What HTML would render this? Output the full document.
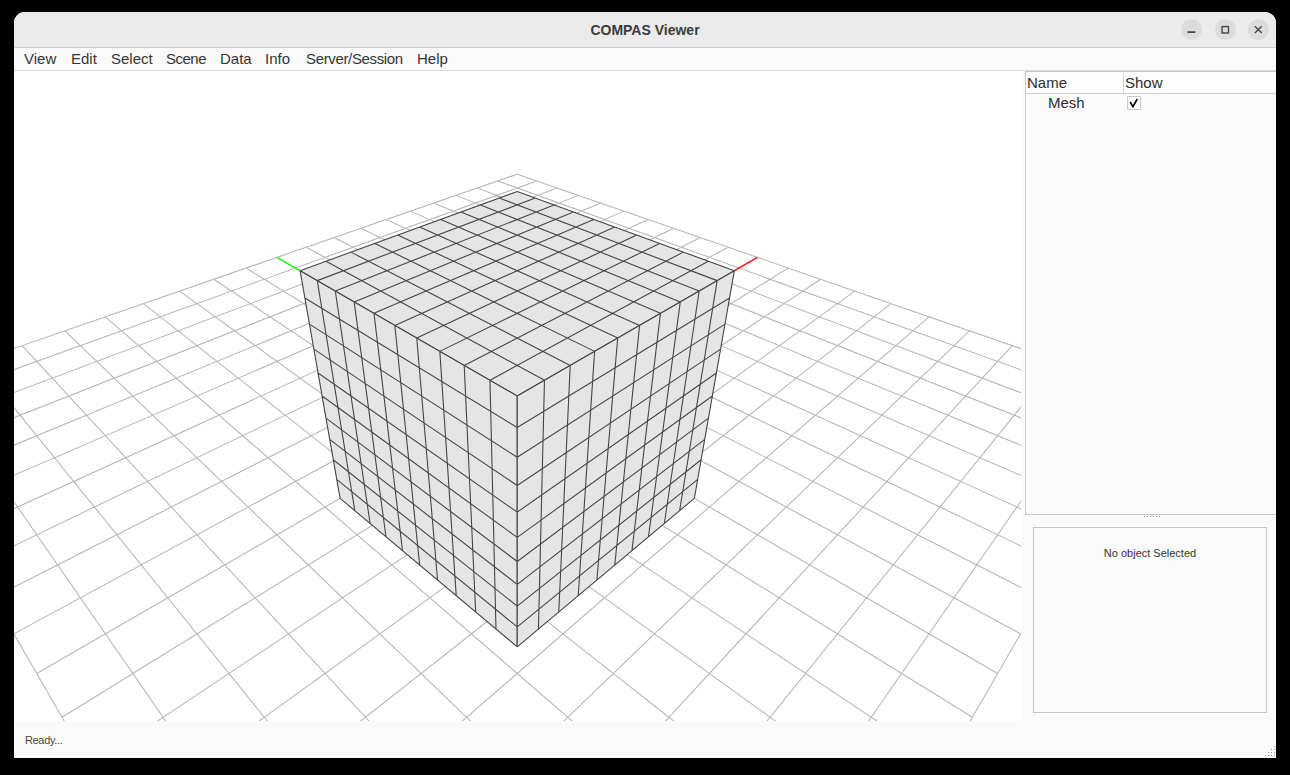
<!DOCTYPE html>
<html><head><meta charset="utf-8">
<style>
html,body{margin:0;padding:0;background:#000;width:1290px;height:775px;overflow:hidden;font-family:"Liberation Sans",sans-serif;}
#win{position:absolute;left:14px;top:12px;width:1262px;height:746px;background:#fafafa;border-radius:11px 11px 0 0;overflow:hidden;}
#title{position:absolute;left:0;top:0;width:1262px;height:35px;background:#ebebeb;border-bottom:1px solid #cfcfcf;}
#title .t{position:absolute;left:0;width:1262px;top:10px;text-align:center;font-weight:bold;font-size:14px;color:#3b3b3b;}
.wb{position:absolute;top:6.5px;width:21px;height:21px;border-radius:50%;background:#dcdcdc;}
#menu{position:absolute;left:0;top:36px;width:1262px;height:22px;background:#fafafa;border-bottom:1px solid #dadada;}
#menu span{position:absolute;top:2px;font-size:15px;color:#353535;}
#view{position:absolute;left:0;top:59px;width:1007px;height:650px;background:#fff;overflow:hidden;}
#tree{position:absolute;left:1011px;top:59px;width:251px;height:442px;background:#fbfbfb;border-left:1px solid #c8c8c8;border-top:1px solid #c8c8c8;border-bottom:1px solid #c8c8c8;}
#tree .hdr{position:absolute;left:0;top:0;width:251px;height:21px;border-bottom:1px solid #cdcdcd;background:#fdfdfd;}
#tree .cd{position:absolute;left:97px;top:0;width:1px;height:21px;background:#d6d6d6;}
#tree span{position:absolute;font-size:15px;color:#2e2e2e;}
#tree .cb{position:absolute;left:101px;top:24px;width:12px;height:12px;border:1px solid #c9c9c9;background:#fff;}
#props{position:absolute;left:1019px;top:515px;width:232px;height:184px;border:1px solid #c8c8c8;background:#fafafa;}
#props span{position:absolute;left:0;width:232px;text-align:center;top:19px;font-size:11px;color:#333;}
#status{position:absolute;left:0;top:709px;width:1262px;height:37px;background:#fafafa;}
#status span{position:absolute;left:11px;top:13px;font-size:11px;color:#444;letter-spacing:-0.35px;}
</style></head><body>
<div id="win">
 <div id="title"><div class="t">COMPAS Viewer</div>
  <div class="wb" style="left:1166.8px"><svg width="21" height="21" style="position:absolute;left:0;top:0"><path d="M6.4 13.1H14.3" stroke="#474747" stroke-width="1.6"/></svg></div>
  <div class="wb" style="left:1200.5px"><svg width="21" height="21" style="position:absolute;left:0;top:0"><rect x="7.1" y="7.6" width="6.4" height="6.4" fill="none" stroke="#474747" stroke-width="1.4"/></svg></div>
  <div class="wb" style="left:1233.9px"><svg width="21" height="21" style="position:absolute;left:0;top:0"><path d="M6.9 7.3L13.7 14.0M13.7 7.3L6.9 14.0" stroke="#474747" stroke-width="1.4"/></svg></div>
 </div>
 <div id="menu">
  <span style="left:10px">View</span><span style="left:57px">Edit</span><span style="left:97px">Select</span><span style="left:152px;letter-spacing:-0.5px">Scene</span><span style="left:206px">Data</span><span style="left:251px">Info</span><span style="left:292px;letter-spacing:-0.35px">Server/Session</span><span style="left:403px">Help</span>
 </div>
 <div id="view"><svg width="1007" height="650" viewBox="0 0 1007 650" style="position:absolute;left:0;top:0"><path d="M503.22,1434.68L-137.42,325.06M503.22,1434.68L1143.86,325.06M590.58,1283.37L-85.75,307.16M415.86,1283.37L1092.19,307.16M663.38,1157.27L-37.32,290.38M343.06,1157.27L1043.76,290.38M724.98,1050.58L8.18,274.62M281.46,1050.58L998.26,274.62M777.78,959.13L51.00,259.79M228.66,959.13L955.44,259.79M823.54,879.87L91.38,245.80M182.90,879.87L915.06,245.80M863.58,810.52L129.51,232.59M142.86,810.52L876.93,232.59M898.91,749.33L165.59,220.10M107.53,749.33L840.85,220.10M930.31,694.93L199.76,208.26M76.13,694.93L806.68,208.26M958.41,646.27L232.18,197.03M48.03,646.27L774.26,197.03M983.70,602.46L262.98,186.36M22.74,602.46L743.46,186.36M1006.58,562.84L292.28,176.21M-0.14,562.84L714.16,176.21M1027.38,526.81L320.18,166.54M-20.94,526.81L686.26,166.54M1046.37,493.92L346.78,157.33M-39.93,493.92L659.66,157.33M1063.78,463.76L372.18,148.53M-57.34,463.76L634.26,148.53M1079.80,436.02L396.45,140.12M-73.36,436.02L609.99,140.12M1094.58,410.42L419.66,132.08M-88.14,410.42L586.78,132.08M1108.27,386.71L441.88,124.38M-101.83,386.71L564.56,124.38M1120.98,364.69L463.18,117.01M-114.54,364.69L543.26,117.01M1132.81,344.19L483.61,109.93M-126.37,344.19L522.83,109.93M1143.86,325.06L503.22,103.14M-137.42,325.06L503.22,103.14" stroke="#b6b6b6" stroke-width="1.05" fill="none"/><path d="M503.22,325.06L743.46,186.36" stroke="#ff1a1a" stroke-width="1.6" fill="none"/><path d="M503.22,325.06L262.98,186.36" stroke="#1aff1a" stroke-width="1.6" fill="none"/><polygon points="503.22,325.06 720.37,199.69 503.22,120.54 286.07,199.69" fill="#e5e5e5"/><path d="M503.22,325.06L286.07,199.69M503.22,325.06L720.37,199.69M530.48,309.32L312.11,190.20M475.96,309.32L694.33,190.20M556.23,294.45L337.01,181.12M450.21,294.45L669.43,181.12M580.61,280.38L360.87,172.43M425.83,280.38L645.57,172.43M603.70,267.05L383.73,164.09M402.74,267.05L622.71,164.09M625.62,254.39L405.67,156.09M380.82,254.39L600.77,156.09M646.46,242.36L426.73,148.42M359.98,242.36L579.71,148.42M666.28,230.92L446.97,141.04M340.16,230.92L559.47,141.04M685.16,220.02L466.44,133.94M321.28,220.02L540.00,133.94M703.17,209.62L485.18,127.11M303.27,209.62L521.26,127.11M720.37,199.69L503.22,120.54M286.07,199.69L503.22,120.54" stroke="#454545" stroke-width="1.1" fill="none"/><polygon points="503.22,575.80 326.10,427.32 286.07,199.69 503.22,325.06" fill="#e5e5e5"/><path d="M503.22,575.80L503.22,325.06M503.22,575.80L326.10,427.32M481.99,558.00L475.96,309.32M503.22,555.94L322.77,408.41M461.67,540.97L450.21,294.45M503.22,535.15L319.32,388.77M442.21,524.66L425.83,280.38M503.22,513.34L315.73,368.36M423.56,509.02L402.74,267.05M503.22,490.45L312.00,347.14M405.67,494.03L380.82,254.39M503.22,466.40L308.12,325.06M388.49,479.62L359.98,242.36M503.22,441.09L304.07,302.06M371.98,465.78L340.16,230.92M503.22,414.42L299.86,278.10M356.10,452.47L321.28,220.02M503.22,386.27L295.46,253.09M340.82,439.66L303.27,209.62M503.22,356.54L290.87,226.98M326.10,427.32L286.07,199.69M503.22,325.06L286.07,199.69" stroke="#454545" stroke-width="1.1" fill="none"/><polygon points="503.22,575.80 680.34,427.32 720.37,199.69 503.22,325.06" fill="#e5e5e5"/><path d="M503.22,575.80L503.22,325.06M503.22,575.80L680.34,427.32M524.45,558.00L530.48,309.32M503.22,555.94L683.67,408.41M544.77,540.97L556.23,294.45M503.22,535.15L687.12,388.77M564.23,524.66L580.61,280.38M503.22,513.34L690.71,368.36M582.88,509.02L603.70,267.05M503.22,490.45L694.44,347.14M600.77,494.03L625.62,254.39M503.22,466.40L698.32,325.06M617.95,479.62L646.46,242.36M503.22,441.09L702.37,302.06M634.46,465.78L666.28,230.92M503.22,414.42L706.58,278.10M650.34,452.47L685.16,220.02M503.22,386.27L710.98,253.09M665.62,439.66L703.17,209.62M503.22,356.54L715.57,226.98M680.34,427.32L720.37,199.69M503.22,325.06L720.37,199.69" stroke="#454545" stroke-width="1.1" fill="none"/></svg></div>
 <div id="tree">
  <div class="hdr"><div class="cd"></div></div>
  <span style="left:1px;top:2px">Name</span><span style="left:99px;top:2px">Show</span>
  <span style="left:22px;top:22px">Mesh</span>
  <div class="cb"><svg width="12" height="12" style="position:absolute;left:0;top:0"><path d="M2.1 5.0L4.9 9.6L9.3 2.0" fill="none" stroke="#000" stroke-width="1.7"/></svg></div>
 </div>
 <div id="props"><span>No object Selected</span></div>
 <div id="status"><span>Ready...</span></div>
 <div style="position:absolute;left:1130px;top:504px;width:1px;height:1px;background:#8c8c8c"></div><div style="position:absolute;left:1133px;top:504px;width:1px;height:1px;background:#8c8c8c"></div><div style="position:absolute;left:1136px;top:504px;width:1px;height:1px;background:#8c8c8c"></div><div style="position:absolute;left:1139px;top:504px;width:1px;height:1px;background:#8c8c8c"></div><div style="position:absolute;left:1142px;top:504px;width:1px;height:1px;background:#8c8c8c"></div><div style="position:absolute;left:1145px;top:504px;width:1px;height:1px;background:#8c8c8c"></div><div style="position:absolute;left:1260px;top:734px;width:1px;height:1px;background:#9a9a9a"></div><div style="position:absolute;left:1260px;top:737px;width:1px;height:1px;background:#9a9a9a"></div><div style="position:absolute;left:1257px;top:737px;width:1px;height:1px;background:#9a9a9a"></div><div style="position:absolute;left:1260px;top:740px;width:1px;height:1px;background:#9a9a9a"></div><div style="position:absolute;left:1257px;top:740px;width:1px;height:1px;background:#9a9a9a"></div><div style="position:absolute;left:1254px;top:740px;width:1px;height:1px;background:#9a9a9a"></div><div style="position:absolute;left:1260px;top:743px;width:1px;height:1px;background:#9a9a9a"></div><div style="position:absolute;left:1257px;top:743px;width:1px;height:1px;background:#9a9a9a"></div><div style="position:absolute;left:1254px;top:743px;width:1px;height:1px;background:#9a9a9a"></div><div style="position:absolute;left:1251px;top:743px;width:1px;height:1px;background:#9a9a9a"></div>
</div>
</body></html>
